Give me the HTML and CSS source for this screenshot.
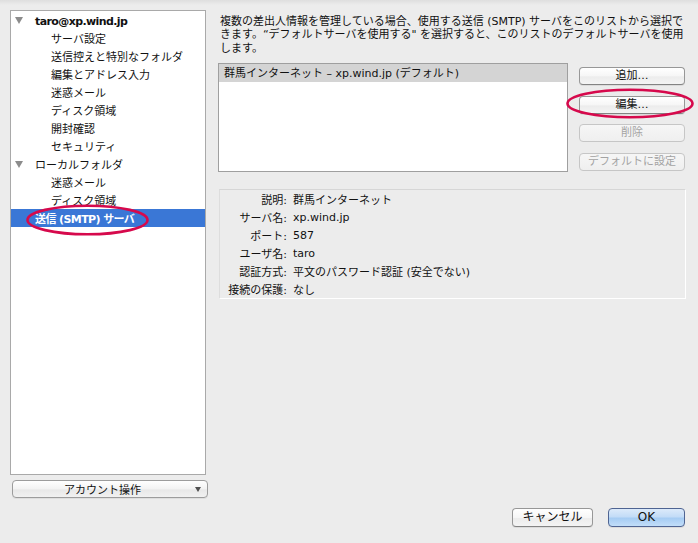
FILE: index.html
```html
<!DOCTYPE html>
<html lang="ja">
<head>
<meta charset="utf-8">
<title>アカウント設定</title>
<link rel="stylesheet" href="styles.css">
</head>
<body>
<div class="window">
  <div class="main">
    <div class="sidebar">
      <div class="tree">
        <div class="row level0 bold"><span class="disclosure"></span><span class="label">taro@xp.wind.jp</span></div>
        <div class="row level1">サーバ設定</div>
        <div class="row level1">送信控えと特別なフォルダ</div>
        <div class="row level1">編集とアドレス入力</div>
        <div class="row level1">迷惑メール</div>
        <div class="row level1">ディスク領域</div>
        <div class="row level1">開封確認</div>
        <div class="row level1">セキュリティ</div>
        <div class="row level0"><span class="disclosure"></span><span class="label">ローカルフォルダ</span></div>
        <div class="row level1">迷惑メール</div>
        <div class="row level1">ディスク領域</div>
        <div class="row level0-leaf bold selected">送信 (SMTP) サーバ</div>
        <svg class="mark mark-tree" width="123" height="32" viewBox="0 0 123 32"><ellipse cx="61.5" cy="16" rx="60" ry="14.3" fill="none" stroke="#d6094c" stroke-width="2.6"/></svg>
      </div>
      <div class="popup"><span class="popup-label">アカウント操作</span><span class="popup-arrow"></span></div>
    </div>
    <div class="content">
      <p class="intro">複数の差出人情報を管理している場合、使用する送信 (SMTP) サーバをこのリストから選択で<br>きます。“デフォルトサーバを使用する" を選択すると、このリストのデフォルトサーバを使用<br>します。</p>
      <div class="servers">
        <div class="server-list">
          <div class="server-row selected">群馬インターネット – xp.wind.jp (デフォルト)</div>
        </div>
        <div class="server-buttons">
          <div class="btn">追加…</div>
          <div class="btn">編集…</div>
          <div class="btn disabled">削除</div>
          <div class="btn disabled">デフォルトに設定</div>
          <svg class="mark mark-btn" width="128" height="31" viewBox="0 0 128 31"><ellipse cx="64" cy="15.5" rx="62.5" ry="13.8" fill="none" stroke="#d6094c" stroke-width="2.6"/></svg>
        </div>
      </div>
      <div class="details">
        <div class="dt">説明:</div><div class="dd">群馬インターネット</div>
        <div class="dt">サーバ名:</div><div class="dd">xp.wind.jp</div>
        <div class="dt">ポート:</div><div class="dd">587</div>
        <div class="dt">ユーザ名:</div><div class="dd">taro</div>
        <div class="dt">認証方式:</div><div class="dd">平文のパスワード認証 (安全でない)</div>
        <div class="dt">接続の保護:</div><div class="dd">なし</div>
      </div>
    </div>
  </div>
  <div class="footer">
    <div class="btn footer-btn cancel">キャンセル</div>
    <div class="btn footer-btn ok">OK</div>
  </div>
</div>
</body>
</html>
```

FILE: styles.css
```css
html, body {
  margin: 0;
  padding: 0;
}
body {
  background: #ececec;
  font-family: "DejaVu Sans", "Noto Sans CJK JP", sans-serif;
  font-size: 11px;
  color: #111;
  width: 698px;
  height: 543px;
  overflow: hidden;
}
.window {
  width: 698px;
  height: 543px;
  background: linear-gradient(#dedede 0, #ececec 5px, #ececec 100%);
}
.main {
  display: flex;
  padding: 10px 12px 0 10px;
}
.sidebar {
  width: 198px;
  display: flex;
  flex-direction: column;
}
.tree {
  position: relative;
  width: 194px;
  height: 463px;
  background: #fff;
  border: 1px solid #a9a9a9;
}
.row {
  box-sizing: border-box;
  height: 18px;
  line-height: 18px;
  padding-top: 1.5px;
  display: flex;
  align-items: flex-start;
  white-space: nowrap;
}
.bold {
  font-weight: bold;
}
.bold .label, .row.bold {
  letter-spacing: -0.6px;
}
.level0 {
  padding-left: 4px;
}
.disclosure {
  align-self: center;
  width: 0;
  height: 0;
  border-left: 4px solid transparent;
  border-right: 4px solid transparent;
  border-top: 7px solid #8c8c8c;
  margin-right: 12px;
}
.level1 {
  padding-left: 40px;
}
.level0-leaf {
  padding-left: 24px;
}
.row.selected {
  background: #3a77d6;
  color: #fff;
}
.mark {
  position: absolute;
  overflow: visible;
}
.mark-tree {
  left: 15px;
  top: 193px;
}
.popup {
  margin-top: 5px;
  margin-left: 2px;
  height: 16px;
  border: 1px solid #9c9c9c;
  border-radius: 4px;
  background: linear-gradient(#ffffff, #f3f3f3 50%, #e8e8e8 55%, #f1f1f1);
  display: flex;
  align-items: center;
  box-shadow: 0 1px 0 rgba(0,0,0,0.06);
}
.popup-label {
  flex: 1;
  text-align: center;
}
.popup-arrow {
  width: 0;
  height: 0;
  border-left: 3.5px solid transparent;
  border-right: 3.5px solid transparent;
  border-top: 5px solid #505050;
  margin: 0 6px 0 3px;
}
.content {
  margin-left: 10px;
  width: 468px;
  padding-top: 4.5px;
}
.intro {
  margin: 0 0 8px 0;
  padding-left: 2px;
  line-height: 13.5px;
  white-space: nowrap;
}
.servers {
  display: flex;
  gap: 11px;
}
.server-list {
  width: 348px;
  height: 107px;
  background: #fff;
  border: 1px solid #9f9f9f;
}
.server-row {
  height: 18px;
  line-height: 19px;
  padding-left: 5px;
  white-space: nowrap;
}
.server-row.selected {
  background: #d4d4d4;
}
.server-buttons {
  position: relative;
  width: 106px;
  padding-top: 4px;
  display: flex;
  flex-direction: column;
  gap: 10.5px;
}
.mark-btn {
  left: -13px;
  top: 25px;
}
.btn {
  height: 16px;
  line-height: 16px;
  border: 1px solid #979797;
  border-bottom-color: #838383;
  border-radius: 4px;
  background: linear-gradient(#ffffff, #f6f6f6 50%, #ececec 55%, #f4f4f4);
  text-align: center;
  white-space: nowrap;
  box-shadow: 0 1px 0 rgba(0,0,0,0.07);
}
.btn.disabled {
  color: #a3a3a3;
  border-color: #c6c6c6;
  background: linear-gradient(#f6f6f6, #efefef);
  box-shadow: none;
}
.details {
  margin-top: 17px;
  margin-left: 1px;
  width: 465px;
  border: 1px solid;
  border-color: #d6d6d6 #ffffff #ffffff #dddddd;
  display: grid;
  grid-template-columns: 67px 1fr;
  column-gap: 6px;
  grid-auto-rows: 18px;
  align-items: center;
}
.dt {
  text-align: right;
  white-space: nowrap;
}
.dd {
  white-space: nowrap;
}
.footer {
  display: flex;
  justify-content: flex-end;
  gap: 15px;
  padding-right: 13px;
  margin-top: 10px;
}
.footer-btn {
  height: 17px;
  line-height: 17px;
  font-size: 12px;
}
.cancel {
  width: 79px;
}
.ok {
  width: 75px;
  border-color: #4f6492;
  background: linear-gradient(#dceafa, #c3dcf7 45%, #a6ccf3 55%, #c2def9);
}
```
